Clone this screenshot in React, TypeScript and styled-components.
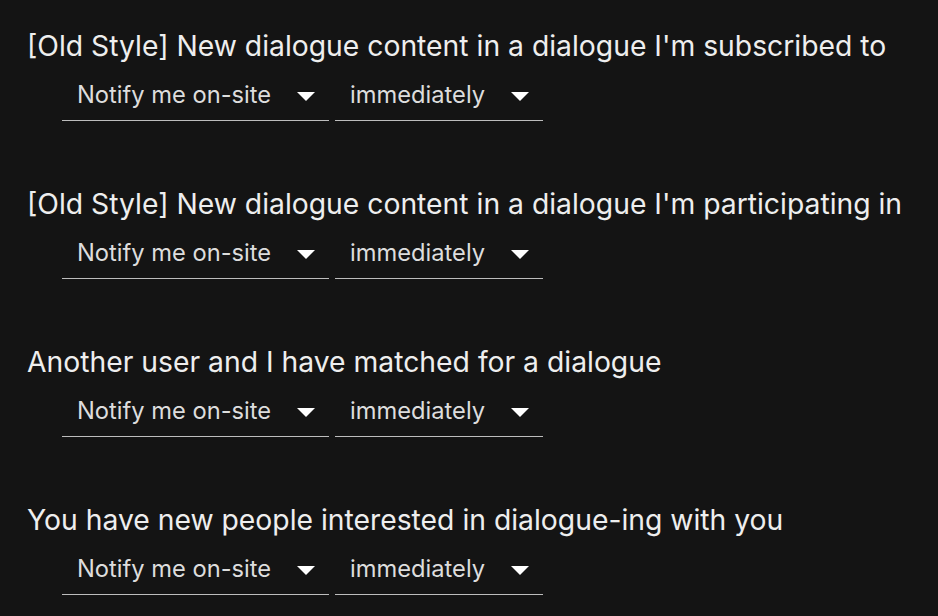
import React from 'react';
import styled, { createGlobalStyle } from 'styled-components';

const GlobalStyle = createGlobalStyle`
  html, body {
    margin: 0;
    padding: 0;
    background: #141414;
  }
  body {
    font-family: Inter, "Noto Sans", sans-serif;
    color: #eeeeee;
  }
`;

const List = styled.div`
  display: flex;
  flex-direction: column;
  padding: 26px 0 0 27px;
  gap: 63px;
`;

const Setting = styled.div`
  display: flex;
  flex-direction: column;
`;

const Label = styled.div`
  font-size: 28.3px;
  line-height: 40px;
  color: #eeeeee;
  white-space: nowrap;
`;

const Controls = styled.div`
  display: flex;
  gap: 6px;
  margin-left: 35px;
  margin-top: 3px;
`;

const SelectBox = styled.div<{ $width: number }>`
  position: relative;
  width: ${p => p.$width}px;
  height: 52px;
  box-sizing: border-box;
  border-bottom: 1px solid #bdbdbd;
  display: flex;
  align-items: center;
  padding-left: 15px;
  font-size: 23.7px;
  color: #dddddd;
`;

const Arrow = styled.svg`
  position: absolute;
  right: 14px;
  top: 23px;
  width: 18px;
  height: 9px;
  fill: #ffffff;
`;

const rows = [
  "[Old Style] New dialogue content in a dialogue I'm subscribed to",
  "[Old Style] New dialogue content in a dialogue I'm participating in",
  'Another user and I have matched for a dialogue',
  'You have new people interested in dialogue-ing with you',
];

const Select: React.FC<{ value: string; width: number }> = ({ value, width }) => (
  <SelectBox $width={width}>
    {value}
    <Arrow viewBox="0 0 18 9">
      <path d="M0 0h18L9 9z" />
    </Arrow>
  </SelectBox>
);

export default function App() {
  return (
    <>
      <GlobalStyle />
      <List>
        {rows.map(r => (
          <Setting key={r}>
            <Label>{r}</Label>
            <Controls>
              <Select value="Notify me on-site" width={267} />
              <Select value="immediately" width={208} />
            </Controls>
          </Setting>
        ))}
      </List>
    </>
  );
}
